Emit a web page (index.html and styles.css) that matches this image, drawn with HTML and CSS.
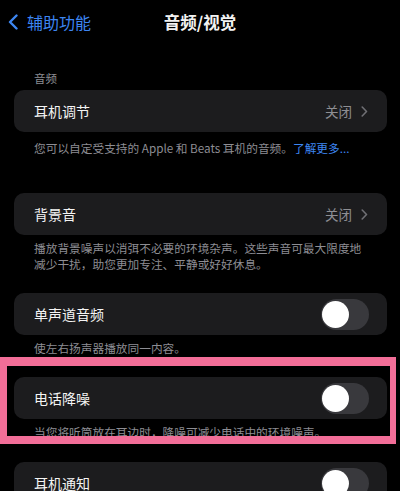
FILE: index.html
```html
<!DOCTYPE html>
<html lang="zh-CN">
<head>
<meta charset="utf-8">
<link rel="stylesheet" href="styles.css">
</head>
<body>
<div class="page">
  <div class="nav">
    <div class="back">
      <svg class="back-icon" width="12" height="16" viewBox="0 0 12 16"><path d="M9.5 1.5 L3 8 L9.5 14.5" fill="none" stroke="#3d86f2" stroke-width="2.4" stroke-linecap="round" stroke-linejoin="round"/></svg>
      <span>辅助功能</span>
    </div>
    <div class="title">音频/视觉</div>
    <div></div>
  </div>

  <div class="header">音频</div>
  <div class="card card-1">
    <span class="label">耳机调节</span>
    <span class="value">关闭<svg class="chev" width="7" height="11" viewBox="0 0 7 11"><path d="M1.2 1 L5.5 5.5 L1.2 10" fill="none" stroke="#6f6f74" stroke-width="1.6" stroke-linecap="round" stroke-linejoin="round"/></svg></span>
  </div>
  <div class="note note-1">您可以自定受支持的 Apple 和 Beats 耳机的音频。<span class="link">了解更多...</span></div>

  <div class="card card-2">
    <span class="label">背景音</span>
    <span class="value">关闭<svg class="chev" width="7" height="11" viewBox="0 0 7 11"><path d="M1.2 1 L5.5 5.5 L1.2 10" fill="none" stroke="#6f6f74" stroke-width="1.6" stroke-linecap="round" stroke-linejoin="round"/></svg></span>
  </div>
  <div class="note">播放背景噪声以消弭不必要的环境杂声。这些声音可最大限度地减少干扰，助您更加专注、平静或好好休息。</div>

  <div class="card card-3">
    <span class="label">单声道音频</span>
    <span class="toggle"><span class="knob"></span></span>
  </div>
  <div class="note">使左右扬声器播放同一内容。</div>

  <div class="card card-3">
    <span class="label">电话降噪</span>
    <span class="toggle"><span class="knob"></span></span>
  </div>
  <div class="note">当您将听筒放在耳边时，降噪可减少电话中的环境噪声。</div>

  <div class="card card-5">
    <span class="label">耳机通知</span>
    <span class="toggle"><span class="knob"></span></span>
  </div>

  <div class="highlight"></div>
</div>
</body>
</html>
```

FILE: styles.css
```css
html, body {
  margin: 0;
  padding: 0;
  background: #000;
}
body {
  font-family: "Noto Sans CJK SC", "Noto Sans", sans-serif;
  color: #fff;
  width: 400px;
  height: 491px;
  overflow: hidden;
}
.page {
  position: relative;
  height: 491px;
  overflow: hidden;
}
.nav {
  height: 44px;
  display: grid;
  grid-template-columns: 1fr auto 1fr;
  align-items: center;
}
.back {
  display: flex;
  align-items: center;
  padding-left: 7px;
  color: #3d86f2;
  font-size: 16px;
  line-height: 20px;
}
.back-icon {
  margin-right: 8px;
}
.title {
  font-size: 16.5px;
  font-weight: 600;
  line-height: 20px;
  color: #f2f2f2;
}
.header {
  margin-top: 26px;
  padding-left: 34px;
  font-size: 11.5px;
  line-height: 16px;
  color: #8d8d93;
}
.card {
  margin: 4px 13px 0 14px;
  height: 42px;
  border-radius: 10px;
  background: #1c1c1e;
  display: flex;
  align-items: center;
  justify-content: space-between;
  padding: 0 18px 0 20px;
}
.card-2 { margin-top: 37px; padding-right: 19px; }
.card-1 { padding-right: 19px; }
.card-3 { margin-top: 21px; }
.card-5 { margin-top: 22px; }
.label {
  font-size: 14px;
  line-height: 20px;
  color: #f4f4f4;
}
.value {
  display: flex;
  align-items: center;
  font-size: 13.5px;
  color: #8e8e93;
}
.chev {
  margin-left: 9px;
}
.toggle {
  position: relative;
  width: 48px;
  height: 31px;
  border-radius: 16px;
  background: #39393d;
  display: flex;
  align-items: center;
  padding-left: 1px;
  box-sizing: border-box;
}
.knob {
  width: 27px;
  height: 27px;
  border-radius: 50%;
  background: #fff;
}
.note {
  margin-top: 5px;
  padding: 0 34px 0 34px;
  font-size: 11.7px;
  line-height: 16px;
  color: #8d8d93;
}
.note-1 { margin-top: 8px; padding-right: 20px; }
.link { color: #3d86f2; }
.highlight {
  position: absolute;
  left: 0;
  top: 357px;
  width: 396px;
  height: 87px;
  box-sizing: border-box;
  border-style: solid;
  border-color: #f26e98;
  border-width: 9px 6px 8px 7px;
}
```
